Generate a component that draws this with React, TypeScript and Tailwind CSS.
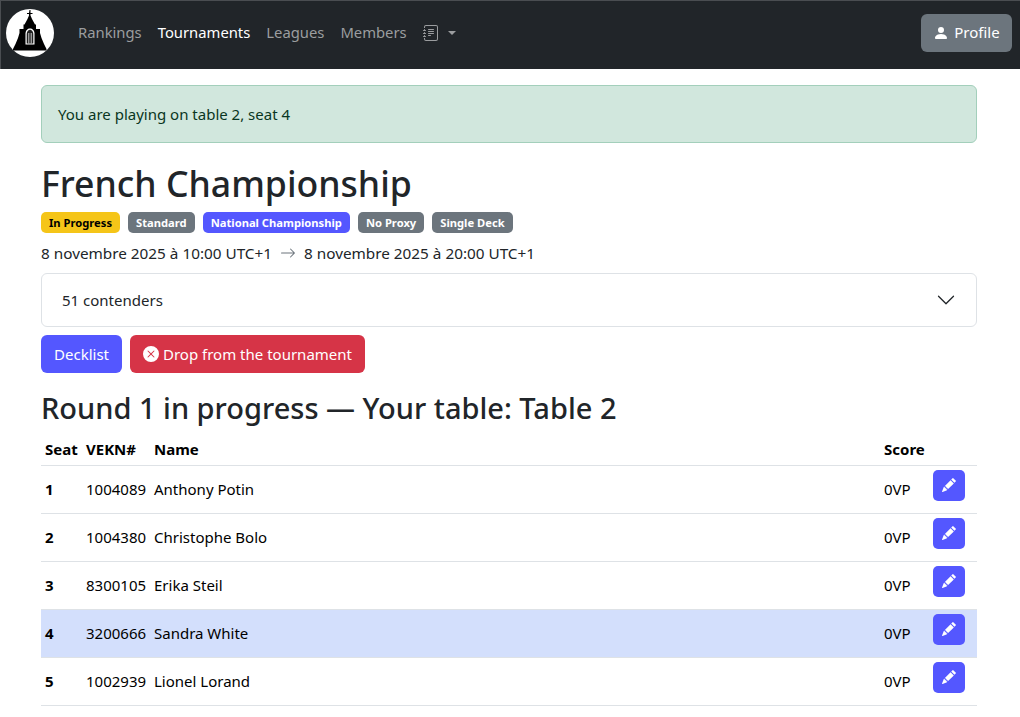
const PENCIL = "M12.854.146a.5.5 0 0 0-.707 0L10.500 1.793 14.207 5.500l1.647-1.646a.5.5 0 0 0 0-.708zm.646 6.061L9.793 2.500 3.293 9H3.500a.5.5 0 0 1 .5.5v.5h.5a.5.5 0 0 1 .5.5v.5h.5a.5.5 0 0 1 .5.5v.5h.5a.5.5 0 0 1 .5.5v.207zm-7.468 7.468A.5.5 0 0 1 6 13.500V13h-.5a.5.5 0 0 1-.5-.5V12h-.5a.5.5 0 0 1-.5-.5V11h-.5a.5.5 0 0 1-.5-.5V10h-.5a.5.5 0 0 1-.175-.032l-.179.178a.5.5 0 0 0-.11.168l-2 5a.5.5 0 0 0 .65.65l5-2a.5.5 0 0 0 .168-.11z";

function Icon({ d, className }: { d: string | string[]; className?: string }) {
  const paths = Array.isArray(d) ? d : [d];
  return (
    <svg viewBox="0 0 16 16" fill="currentColor" className={className}>
      {paths.map((p) => (
        <path key={p} d={p} />
      ))}
    </svg>
  );
}

function Logo() {
  return (
    <svg viewBox="0 0 48 48" className="w-12 h-12 block">
      <circle cx="24" cy="24" r="24" fill="#fff" />
      <path d="M23.500 1h1v3h2v1h-2v1.500L26 10l3 5.500h1V20h4v4l1.500 5 2.500 6 2.500 5v1.500H7V40l2.500-5 2.500-6 1.500-5v-4h4v-4.500h1l3-5.500 1.500-3.500V5h-2V4h2z" fill="#000" />
      <path d="M19.500 35.500V24.500c0-3 2.200-5 4.500-5s4.500 2 4.500 5v11z" fill="#fff" />
      <path d="M20.700 34.500V25c0-2.400 1.700-4.200 3.300-4.200s3.300 1.800 3.300 4.200v9.500z" fill="#222" />
      <path d="M22.300 34.500V24h1v10.500zM24.700 34.500V24h1v10.500z" fill="#ccc" />
    </svg>
  );
}

const rows = [
  ["1", "1004089", "Anthony Potin"],
  ["2", "1004380", "Christophe Bolo"],
  ["3", "8300105", "Erika Steil"],
  ["4", "3200666", "Sandra White"],
  ["5", "1002939", "Lionel Lorand"],
];

function Badge({ children, className }: { children: string; className: string }) {
  return (
    <span className={`h-[21px] px-[8px] rounded-[5px] text-[11.2px] leading-[21px] font-bold whitespace-nowrap ${className}`}>
      {children}
    </span>
  );
}

export default function App() {
  return (
    <div className="bg-white text-[#212529] text-[15px] font-['Noto_Sans','Open_Sans',sans-serif] min-h-[717px]">
      <nav className="h-[69px] bg-[#212529] border-t border-l border-[#4a4d51] flex items-center pl-[5px] pr-2 pb-[5px]">
        <Logo />
        <div className="flex items-center ml-[24px] gap-[16px] text-[14.8px] text-[#9b9d9f]">
          <span>Rankings</span>
          <span className="text-white">Tournaments</span>
          <span>Leagues</span>
          <span>Members</span>
          <span className="flex items-center gap-[9px]">
            <Icon
              className="w-4 h-4"
              d={[
                "M5 10.500a.5.5 0 0 1 .5-.5h2a.5.5 0 0 1 0 1h-2a.5.5 0 0 1-.5-.5m0-2a.5.5 0 0 1 .5-.5h5a.5.5 0 0 1 0 1h-5a.5.5 0 0 1-.5-.5m0-2a.5.5 0 0 1 .5-.5h5a.5.5 0 0 1 0 1h-5a.5.5 0 0 1-.5-.5m0-2a.5.5 0 0 1 .5-.5h5a.5.5 0 0 1 0 1h-5a.5.5 0 0 1-.5-.5",
                "M3 0h10a2 2 0 0 1 2 2v12a2 2 0 0 1-2 2H3a2 2 0 0 1-2-2v-1h1v1a1 1 0 0 0 1 1h10a1 1 0 0 0 1-1V2a1 1 0 0 0-1-1H3a1 1 0 0 0-1 1v1H1V2a2 2 0 0 1 2-2",
                "M1 5v-.5a.5.5 0 0 1 1 0V5h.5a.5.5 0 0 1 0 1h-2a.5.5 0 0 1 0-1zm0 3v-.5a.5.5 0 0 1 1 0V8h.5a.5.5 0 0 1 0 1h-2a.5.5 0 0 1 0-1zm0 3v-.5a.5.5 0 0 1 1 0v.5h.5a.5.5 0 0 1 0 1h-2a.5.5 0 0 1 0-1z",
              ]}
            />
            <span className="w-0 h-0 border-x-[4px] border-x-transparent border-t-[4px] border-t-[#9b9d9f]" />
          </span>
        </div>
        <button className="ml-auto h-[38px] w-[91px] rounded-md bg-[#6c757d] text-white flex items-center justify-center gap-[5px] text-[15px]">
          <Icon className="w-4 h-4" d="M3 14s-1 0-1-1 1-4 6-4 6 3 6 4-1 1-1 1zm5-6a3 3 0 1 0 0-6 3 3 0 0 0 0 6" />
          Profile
        </button>
      </nav>

      <main className="mx-[41px] w-[936px] pt-4">
        <div className="h-[58px] rounded-md border border-[#a3cfbb] bg-[#d1e7dd] text-[#0a3622] px-4 flex items-center">
          You are playing on table 2, seat 4
        </div>
        <h1 className="mt-[16px] h-[49px] text-[35.6px] leading-[48px] font-medium">French Championship</h1>
        <div className="mt-[4px] flex gap-2">
          <Badge className="bg-[#f5c518] text-black">In Progress</Badge>
          <Badge className="bg-[#6c757d] text-white">Standard</Badge>
          <Badge className="bg-[#5457ff] text-white">National Championship</Badge>
          <Badge className="bg-[#6c757d] text-white">No Proxy</Badge>
          <Badge className="bg-[#6c757d] text-white">Single Deck</Badge>
        </div>
        <div className="mt-[8px] h-[24px] leading-[24px] text-[15.3px] flex items-center gap-[8px]">
          <span>8 novembre 2025 à 10:00 UTC+1</span>
          <Icon
            className="w-4 h-4 text-[#6c757d]"
            d="M1 8a.5.5 0 0 1 .5-.5h11.793l-3.147-3.146a.5.5 0 0 1 .708-.708l4 4a.5.5 0 0 1 0 .708l-4 4a.5.5 0 0 1-.708-.708L13.293 8.500H1.500A.5.5 0 0 1 1 8"
          />
          <span>8 novembre 2025 à 20:00 UTC+1</span>
        </div>
        <div className="mt-[8px] h-[54px] rounded-md border border-[#dee2e6] flex items-center justify-between pl-[20px] pr-[20px]">
          <span>51 contenders</span>
          <Icon
            className="w-5 h-5"
            d="M1.646 4.646a.5.5 0 0 1 .708 0L8 10.293l5.646-5.647a.5.5 0 0 1 .708.708l-6 6a.5.5 0 0 1-.708 0l-6-6a.5.5 0 0 1 0-.708"
          />
        </div>
        <div className="mt-[8px] flex gap-2">
          <button className="h-[38px] w-[81px] rounded-md bg-[#5457ff] text-white">Decklist</button>
          <button className="h-[38px] w-[235px] rounded-md bg-[#d63447] text-white flex items-center justify-center gap-[4px]">
            <Icon
              className="w-4 h-4"
              d="M16 8A8 8 0 1 1 0 8a8 8 0 0 1 16 0M5.354 4.646a.5.5 0 1 0-.708.708L7.293 8l-2.647 2.646a.5.5 0 0 0 .708.708L8 8.707l2.646 2.647a.5.5 0 0 0 .708-.708L8.707 8l2.647-2.646a.5.5 0 0 0-.708-.708L8 7.293z"
            />
            Drop from the tournament
          </button>
        </div>
        <h2 className="mt-[16px] h-[38px] text-[29px] leading-[38px] font-medium">Round 1 in progress — Your table: Table 2</h2>
        <table className="mt-[6px] w-full border-collapse text-black">
          <thead>
            <tr className="h-[32px] border-b border-[#dee2e6] font-bold text-left">
              <th className="w-[41px] pl-1 font-bold">Seat</th>
              <th className="w-[68px] pl-1 font-bold">VEKN#</th>
              <th className="pl-1 font-bold">Name</th>
              <th className="w-[49px] pl-0 font-bold">Score</th>
              <th className="w-[44px]" />
            </tr>
          </thead>
          <tbody>
            {rows.map(([seat, vekn, name]) => (
              <tr key={seat} className={`h-[48px] border-b border-[#dee2e6] ${seat === "4" ? "bg-[#d3dffc]" : ""}`}>
                <td className="pl-1 font-bold">{seat}</td>
                <td className="pl-1">{vekn}</td>
                <td className="pl-1">{name}</td>
                <td>0VP</td>
                <td className="align-top pt-[4px]">
                  <span className="w-8 h-[31px] rounded-[5px] bg-[#5457ff] text-white flex items-center justify-center">
                    <Icon className="w-[14px] h-[14px]" d={PENCIL} />
                  </span>
                </td>
              </tr>
            ))}
          </tbody>
        </table>
      </main>
    </div>
  );
}
